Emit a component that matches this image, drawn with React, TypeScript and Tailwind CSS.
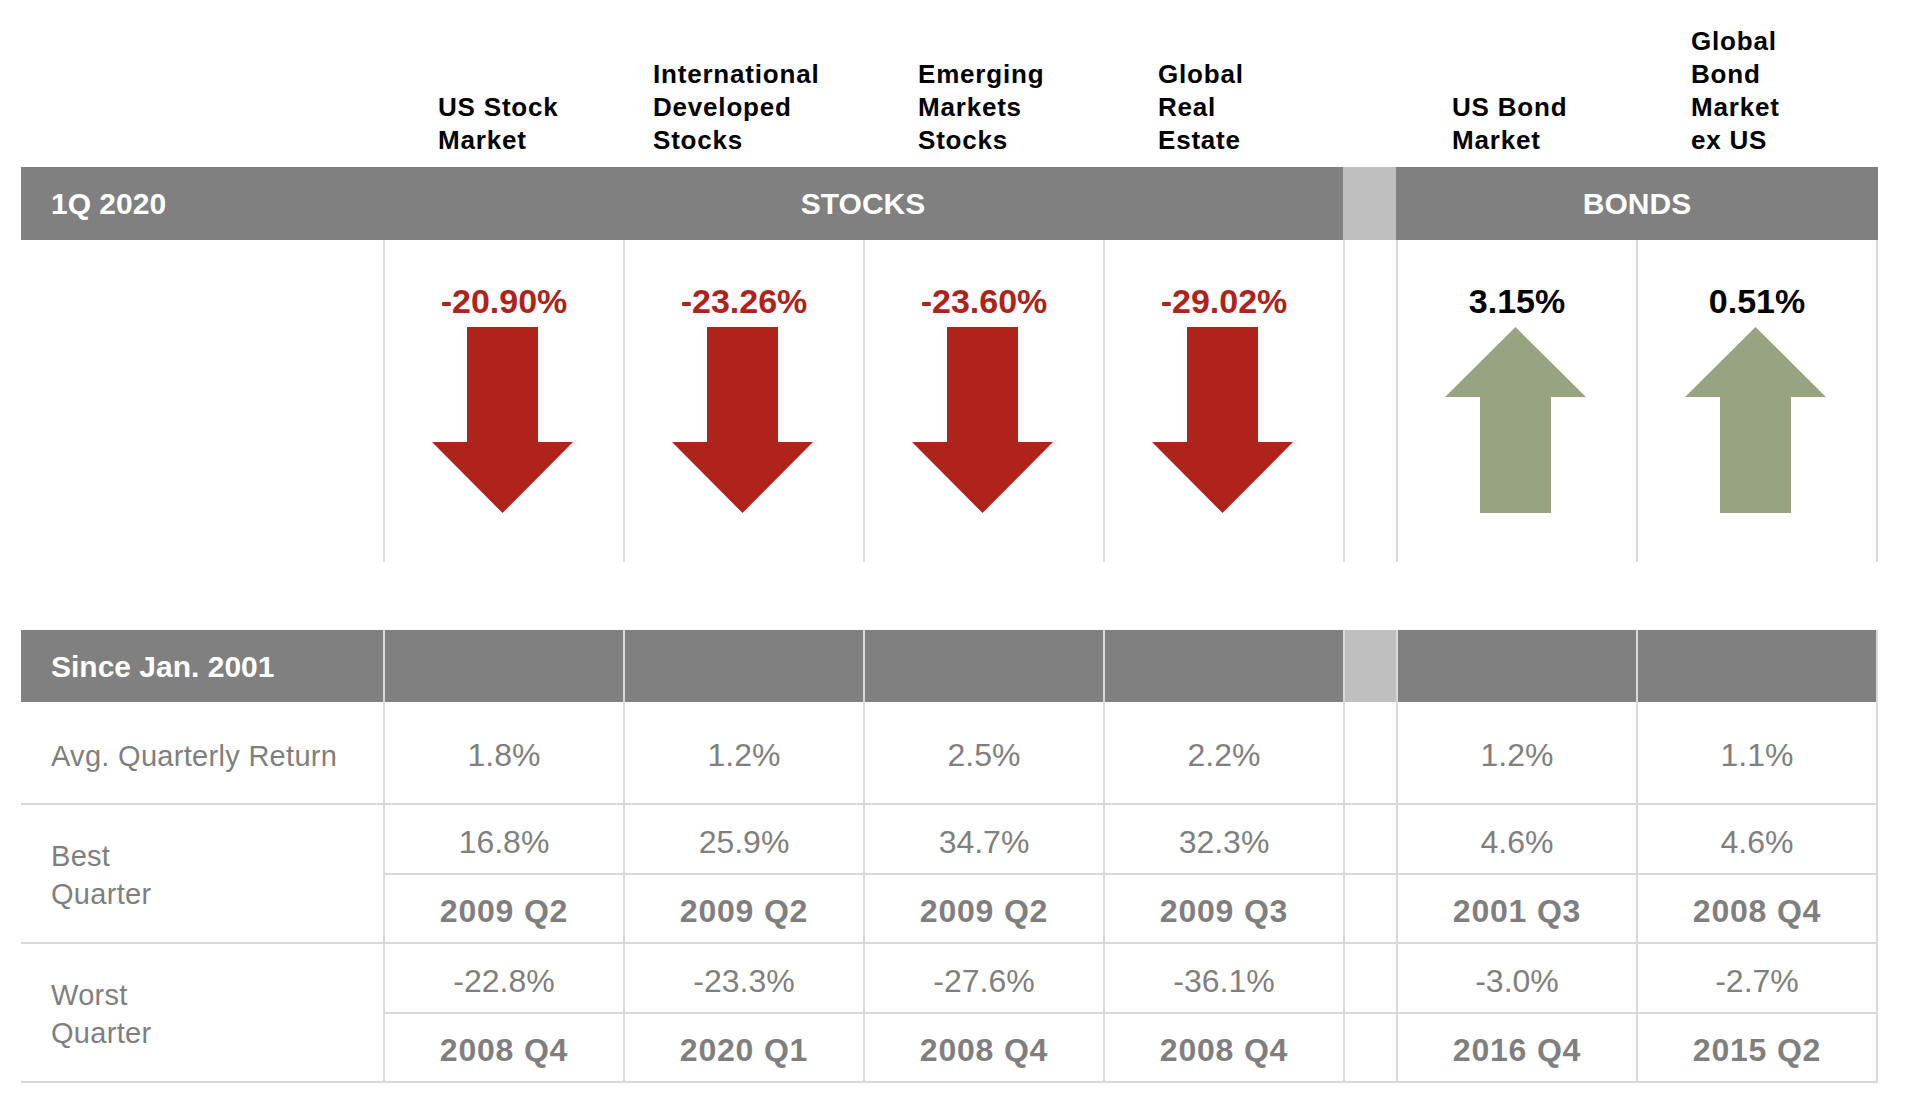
import React from "react";

type Asset = {
  name: string[];
  pad: string;
  change: string;
  up: boolean;
  avg: string;
  best: string;
  bestQ: string;
  worst: string;
  worstQ: string;
};

const stocks: Asset[] = [
  { name: ["US Stock", "Market"], pad: "pl-[55px]", change: "-20.90%", up: false, avg: "1.8%", best: "16.8%", bestQ: "2009 Q2", worst: "-22.8%", worstQ: "2008 Q4" },
  { name: ["International", "Developed", "Stocks"], pad: "pl-[30px]", change: "-23.26%", up: false, avg: "1.2%", best: "25.9%", bestQ: "2009 Q2", worst: "-23.3%", worstQ: "2020 Q1" },
  { name: ["Emerging", "Markets", "Stocks"], pad: "pl-[55px]", change: "-23.60%", up: false, avg: "2.5%", best: "34.7%", bestQ: "2009 Q2", worst: "-27.6%", worstQ: "2008 Q4" },
  { name: ["Global", "Real", "Estate"], pad: "pl-[55px]", change: "-29.02%", up: false, avg: "2.2%", best: "32.3%", bestQ: "2009 Q3", worst: "-36.1%", worstQ: "2008 Q4" },
];

const bonds: Asset[] = [
  { name: ["US Bond", "Market"], pad: "pl-[56px]", change: "3.15%", up: true, avg: "1.2%", best: "4.6%", bestQ: "2001 Q3", worst: "-3.0%", worstQ: "2016 Q4" },
  { name: ["Global", "Bond", "Market", "ex US"], pad: "pl-[55px]", change: "0.51%", up: true, avg: "1.1%", best: "4.6%", bestQ: "2008 Q4", worst: "-2.7%", worstQ: "2015 Q2" },
];

// 362 label | 4 x 240 stocks | 53 spacer | 240 + 242 bonds
const grid = "grid w-[1857px] grid-cols-[362px_240px_240px_240px_240px_53px_240px_242px]";
const line = "border-[#D9D9D9]";

const DownArrow = () => (
  <svg width="141" height="186" viewBox="0 0 141 186" className="-ml-1 mt-[9px]">
    <polygon points="35,0 106,0 106,115 141,115 70.5,186 0,115 35,115" fill="#B0231A" />
  </svg>
);

const UpArrow = () => (
  <svg width="141" height="186" viewBox="0 0 141 186" className="-ml-1 mt-[9px]">
    <polygon points="70.5,0 141,70 106,70 106,186 35,186 35,70 0,70" fill="#98A382" />
  </svg>
);

const ColumnTitle = ({ asset }: { asset: Asset }) => (
  <div className={`flex flex-col justify-end pb-[10px] ${asset.pad}`}>
    {asset.name.map((l) => (
      <span key={l} className="text-[26px] leading-[33px] font-bold tracking-[0.8px] text-black whitespace-nowrap">
        {l}
      </span>
    ))}
  </div>
);

const ChangeCell = ({ asset, last }: { asset: Asset; last?: boolean }) => (
  <div className={`flex flex-col items-center border-l-2 ${line} pt-[44px] ${last ? "border-r-2" : ""}`}>
    <span className={`text-[34px] leading-[34px] font-bold ${asset.up ? "text-black" : "text-[#B0231A]"}`}>
      {asset.change}
    </span>
    {asset.up ? <UpArrow /> : <DownArrow />}
  </div>
);

const Value = ({ children, bold }: { children: React.ReactNode; bold?: boolean }) => (
  <span className={`text-[32px] leading-[32px] text-[#7F7F7F] ${bold ? "font-bold tracking-[0.8px]" : ""}`}>
    {children}
  </span>
);

const PairCell = ({ top, bottom, topH, last }: { top?: string; bottom?: string; topH: string; last?: boolean }) => (
  <div className={`flex flex-col border-l-2 ${line} ${last ? "border-r-2" : ""}`}>
    <div className={`${topH} flex items-center justify-center pt-[5px] border-b-2 ${line}`}>
      {top && <Value>{top}</Value>}
    </div>
    <div className="flex-1 flex items-center justify-center pt-[5px]">
      {bottom && <Value bold>{bottom}</Value>}
    </div>
  </div>
);

const Spacer = ({ bg }: { bg?: string }) => <div className={`border-l-2 ${line} ${bg ?? ""}`} />;

const RangeRow = ({ label, pick, topH }: { label: string; pick: (a: Asset) => [string, string]; topH: string }) => (
  <div className={`${grid} h-[139px] border-b-2 ${line}`}>
    <div className="flex flex-col justify-center pl-[30px] pt-[2px] text-[29px] leading-[38px] tracking-[0.3px] text-[#7F7F7F]">
      <span>{label}</span>
      <span>Quarter</span>
    </div>
    {stocks.map((a) => {
      const [v, q] = pick(a);
      return <PairCell key={a.change} top={v} bottom={q} topH={topH} />;
    })}
    <PairCell topH={topH} />
    {bonds.map((a, i) => {
      const [v, q] = pick(a);
      return <PairCell key={a.change} top={v} bottom={q} topH={topH} last={i === bonds.length - 1} />;
    })}
  </div>
);

export default function App() {
  return (
    <div className="w-[1906px] h-[1112px] overflow-hidden bg-white pl-[21px] font-['Liberation_Sans',Arial,sans-serif]">
      {/* column titles */}
      <div className={`${grid} h-[167px]`}>
        <div />
        {stocks.map((a) => (
          <ColumnTitle key={a.change} asset={a} />
        ))}
        <div />
        {bonds.map((a) => (
          <ColumnTitle key={a.change} asset={a} />
        ))}
      </div>

      {/* quarter band */}
      <div className={`${grid} h-[73px] text-[30px] font-bold text-white`}>
        <div className="bg-[#808080] flex items-center pl-[30px]">1Q 2020</div>
        <div className="col-span-4 bg-[#808080] flex items-center justify-center">STOCKS</div>
        <div className="bg-[#BFBFBF]" />
        <div className="col-span-2 bg-[#808080] flex items-center justify-center">BONDS</div>
      </div>

      {/* quarter returns */}
      <div className={`${grid} h-[322px]`}>
        <div />
        {stocks.map((a) => (
          <ChangeCell key={a.change} asset={a} />
        ))}
        <Spacer />
        {bonds.map((a, i) => (
          <ChangeCell key={a.change} asset={a} last={i === bonds.length - 1} />
        ))}
      </div>

      <div className="h-[68px]" />

      {/* since 2001 band */}
      <div className={`${grid} h-[72px]`}>
        <div className="bg-[#808080] flex items-center pl-[30px] text-[30px] font-bold text-white">Since Jan. 2001</div>
        {stocks.map((a) => (
          <div key={a.change} className={`bg-[#808080] border-l-2 ${line}`} />
        ))}
        <Spacer bg="bg-[#BFBFBF]" />
        {bonds.map((a, i) => (
          <div key={a.change} className={`bg-[#808080] border-l-2 ${line} ${i === 1 ? "border-r-2" : ""}`} />
        ))}
      </div>

      {/* average */}
      <div className={`${grid} h-[103px] border-b-2 ${line}`}>
        <div className="flex items-center pl-[30px] pt-[8px] text-[29px] tracking-[0.3px] text-[#7F7F7F] whitespace-nowrap">
          Avg. Quarterly Return
        </div>
        {stocks.map((a) => (
          <div key={a.change} className={`flex items-center justify-center pt-[5px] border-l-2 ${line}`}>
            <Value>{a.avg}</Value>
          </div>
        ))}
        <Spacer />
        {bonds.map((a, i) => (
          <div key={a.change} className={`flex items-center justify-center pt-[5px] border-l-2 ${line} ${i === 1 ? "border-r-2" : ""}`}>
            <Value>{a.avg}</Value>
          </div>
        ))}
      </div>

      <RangeRow label="Best" pick={(a) => [a.best, a.bestQ]} topH="h-[70px]" />
      <RangeRow label="Worst" pick={(a) => [a.worst, a.worstQ]} topH="h-[70px]" />
    </div>
  );
}
